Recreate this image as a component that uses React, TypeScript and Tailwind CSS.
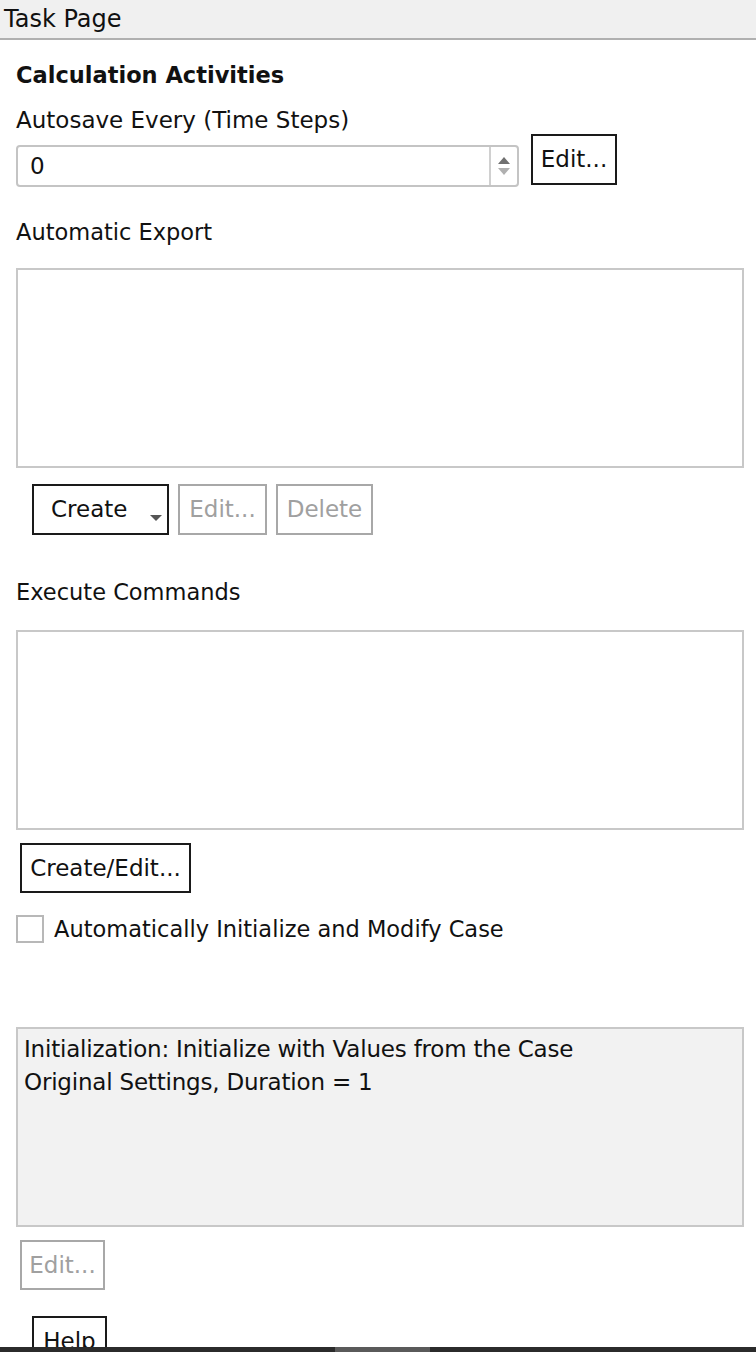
const font = { fontFamily: '"DejaVu Sans", Verdana, sans-serif' }

function Btn({ label, disabled, className = '' }: { label: string; disabled?: boolean; className?: string }) {
  return (
    <div
      className={`flex items-center justify-center bg-white text-[23px] leading-none ${
        disabled ? 'border-2 border-[#a8a8a8] text-[#a0a0a0]' : 'border-2 border-[#1a1a1a] text-[#111]'
      } ${className}`}
    >
      {label}
    </div>
  )
}

export default function App() {
  return (
    <div className="flex h-[1352px] w-[756px] flex-col overflow-hidden bg-white text-[#111]" style={font}>
      {/* Title */}
      <div className="flex h-[40px] shrink-0 items-center border-b-2 border-[#b0b0b0] bg-[#f0f0f0] pl-[4px] text-[24px]">
        Task Page
      </div>

      <div className="flex min-h-0 flex-1 flex-col overflow-hidden pl-4 pr-3 text-[22.5px] [&>*]:shrink-0">
        <div className="mt-[18px] font-bold leading-[34px]">Calculation Activities</div>
        <div className="mt-[11px] text-[23px] leading-[34px]">Autosave Every (Time Steps)</div>

        {/* autosave input */}
        <div className="-mt-[3px] flex items-start">
          <div className="mt-[11px] flex h-[42px] w-[503px] items-stretch rounded-[4px] border-2 border-[#c4c4c4]">
            <div className="flex flex-1 items-center pl-[12px] text-[23px]">0</div>
            <div className="flex w-[28px] flex-col items-center justify-center gap-[4px] border-l-2 border-[#d0d0d0]">
              <svg width="12" height="7" viewBox="0 0 12 7"><path d="M0 7 L6 0 L12 7 Z" fill="#707070" /></svg>
              <svg width="12" height="7" viewBox="0 0 12 7"><path d="M0 0 L6 7 L12 0 Z" fill="#b0b0b0" /></svg>
            </div>
          </div>
          <Btn label="Edit..." className="ml-[12px] h-[51px] w-[86px]" />
        </div>

        <div className="mt-[28px] leading-[34px]">Automatic Export</div>
        <div className="mt-[19px] h-[200px] w-[728px] border-2 border-[#c8c8c8]" />

        <div className="mt-[16px] flex gap-[9px] pl-4">
          <div className="relative flex h-[51px] w-[137px] items-center border-2 border-[#1a1a1a] pl-[17px] text-[23px]">
            Create
            <svg className="absolute right-[5px] bottom-[12px]" width="12" height="6" viewBox="0 0 12 6">
              <path d="M0 0 L6 6 L12 0 Z" fill="#555" />
            </svg>
          </div>
          <Btn label="Edit..." disabled className="h-[51px] w-[89px]" />
          <Btn label="Delete" disabled className="h-[51px] w-[97px]" />
        </div>

        <div className="mt-[40px] leading-[34px]">Execute Commands</div>
        <div className="mt-[21px] h-[200px] w-[728px] border-2 border-[#c8c8c8]" />

        <div className="mt-[13px] pl-1">
          <Btn label="Create/Edit..." className="h-[50px] w-[171px]" />
        </div>

        <div className="mt-[19px] flex items-center gap-[10px]">
          <div className="h-[28px] w-[28px] border-2 border-[#b8b8b8] bg-white" />
          <span className="leading-[34px]">Automatically Initialize and Modify Case</span>
        </div>

        <div className="mt-[81px] h-[200px] w-[728px] border-2 border-[#c8c8c8] bg-[#f2f2f2] px-[6px] pt-[4px] text-[23px] leading-[33px] tracking-[-0.2px]">
          <div>Initialization: Initialize with Values from the Case</div>
          <div>Original Settings, Duration = 1</div>
        </div>

        <div className="mt-[13px] pl-1">
          <Btn label="Edit..." disabled className="h-[50px] w-[85px]" />
        </div>

        <div className="mt-[26px] pl-4">
          <Btn label="Help" className="h-[50px] w-[75px]" />
        </div>
      </div>

      {/* bottom scrollbar */}
      <div className="flex h-[5px] shrink-0 bg-[#2b2b2b]">
        <div className="ml-[335px] w-[95px] bg-[#5a5a5a]" />
      </div>
    </div>
  )
}
